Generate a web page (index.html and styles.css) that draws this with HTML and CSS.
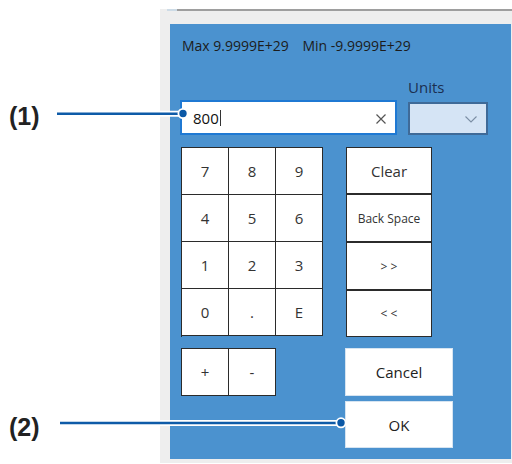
FILE: index.html
```html
<!DOCTYPE html>
<html lang="en">

<head>
    <meta charset="UTF-8">
    <title>Numeric Input</title>
    <link rel="stylesheet" href="styles.css">
</head>

<body>
    <div id="page">
        <div id="labels">
            <div class="callout" id="c1">(1)</div>
            <div class="callout" id="c2">(2)</div>
        </div>

        <div id="win">
            <div id="topbar"></div>
            <div id="frame">
                <div id="panel">
                    <div id="limits">
                        <span>Max 9.9999E+29</span>
                        <span class="min">Min -9.9999E+29</span>
                    </div>

                    <div id="entry">
                        <div id="field">
                            <span class="value">800</span><span class="caret"></span>
                            <svg class="clear" width="10" height="10" viewBox="0 0 10 10">
                                <path d="M0.5 0.5L9.5 9.5M9.5 0.5L0.5 9.5" stroke="#555" stroke-width="1.2" fill="none" />
                            </svg>
                        </div>
                        <div id="units">
                            <span class="units-label">Units</span>
                            <div class="select">
                                <svg width="12" height="7" viewBox="0 0 12 7">
                                    <path d="M0.5 0.5L6 6L11.5 0.5" stroke="#7b8ea4" stroke-width="1.1" fill="none" />
                                </svg>
                            </div>
                        </div>
                    </div>

                    <div id="pad">
                        <div class="keys">
                            <div class="key">7</div>
                            <div class="key">8</div>
                            <div class="key">9</div>
                            <div class="key">4</div>
                            <div class="key">5</div>
                            <div class="key">6</div>
                            <div class="key">1</div>
                            <div class="key">2</div>
                            <div class="key">3</div>
                            <div class="key">0</div>
                            <div class="key">.</div>
                            <div class="key">E</div>
                        </div>
                        <div class="side">
                            <div class="skey big">Clear</div>
                            <div class="skey">Back Space</div>
                            <div class="skey">&gt; &gt;</div>
                            <div class="skey">&lt; &lt;</div>
                        </div>
                    </div>

                    <div id="bottom">
                        <div class="keys signs">
                            <div class="key">+</div>
                            <div class="key">-</div>
                        </div>
                        <div class="actions">
                            <div class="act">Cancel</div>
                            <div class="act ok">OK</div>
                        </div>
                    </div>
                </div>
            </div>
        </div>
    </div>

    <!-- callout lines lie over the dialog -->
    <svg id="lines" width="512" height="464" viewBox="0 0 512 464">
        <path d="M57 113.7H183M60 423H341" stroke="#fff" stroke-width="6" fill="none" />
        <path d="M57 113.7H183M60 423H341" stroke="#0e5ba8" stroke-width="2.6" fill="none" />
        <circle cx="183" cy="113.5" r="4.6" fill="#0b58a6" stroke="#fff" stroke-width="1.8" />
        <circle cx="341" cy="422.8" r="4.6" fill="#0b58a6" stroke="#fff" stroke-width="1.8" />
    </svg>
</body>

</html>
```

FILE: styles.css
```css
* {
    margin: 0;
    padding: 0;
    box-sizing: border-box;
}

body {
    width: 512px;
    height: 464px;
    background: #fff;
    font-family: "Open Sans", "Noto Sans", sans-serif;
    color: #222;
    position: relative;
    overflow: hidden;
}

#page {
    display: flex;
    height: 464px;
}

#labels {
    width: 160px;
    padding: 102px 0 0 9px;
}

.callout {
    font-family: "Liberation Sans", Arial, sans-serif;
    font-weight: bold;
    font-size: 25px;
    line-height: 28px;
    color: #222;
}

#c2 {
    margin-top: 283px;
}

#win {
    width: 352px;
    margin-top: 9px;
}

#topbar {
    height: 2px;
    background: linear-gradient(to right, #eee 0, #eee 7px, #cddbe6 7px, #cddbe6 17px, #9e9e9e 17px);
}

#frame {
    background: #eeeeee;
    padding: 13px 1px 4px 10px;
}

#panel {
    height: 435px;
    background: #4b92cf;
    padding: 14px 0 0 11px;
}

#limits {
    height: 16px;
    line-height: 16px;
    font-size: 14px;
    color: #1c1c1c;
    padding-left: 1px;
    white-space: nowrap;
}

#limits .min {
    margin-left: 10px;
}

#entry {
    display: flex;
    align-items: flex-end;
    margin-top: 23px;
}

#field {
    width: 217px;
    height: 35px;
    margin-left: -1px;
    background: #fff;
    border: 2px solid #1f79d3;
    display: flex;
    align-items: center;
    padding: 0 9px 0 11px;
    font-size: 15px;
    color: #111;
}

#field .caret {
    width: 1px;
    height: 16px;
    background: #333;
    margin-left: 1px;
}

#field .clear {
    margin-left: auto;
    margin-top: 3px;
}

#units {
    margin-left: 11px;
    width: 80px;
    display: flex;
    flex-direction: column;
}

.units-label {
    font-size: 15px;
    line-height: 20px;
    color: #1b2f50;
    margin-bottom: 5px;
}

.select {
    height: 33px;
    background: #d5e4f5;
    border: 2px solid #3f6a98;
    display: flex;
    align-items: center;
    justify-content: flex-end;
    padding: 2px 9px 0 0;
}

#pad {
    display: flex;
    gap: 23px;
    margin-top: 12px;
}

.keys {
    display: grid;
    grid-template-columns: repeat(3, 47px);
    grid-auto-rows: 47px;
    border-top: 1px solid #2b2b2b;
    border-left: 1px solid #2b2b2b;
    width: 142px;
}

.key {
    background: #fff;
    border-right: 1px solid #2b2b2b;
    border-bottom: 1px solid #2b2b2b;
    display: flex;
    align-items: center;
    justify-content: center;
    font-size: 15px;
    color: #333;
}

.side {
    width: 86px;
    display: grid;
    grid-template-rows: 47px 48px 48px 47px;
}

.skey {
    background: #fff;
    border: 1px solid #2b2b2b;
    display: flex;
    align-items: center;
    justify-content: center;
    font-size: 12px;
    color: #333;
}

.skey.big {
    font-size: 15px;
}

#bottom {
    display: flex;
    margin-top: 11px;
}

.keys.signs {
    grid-template-columns: repeat(2, 47px);
    width: 95px;
    align-self: flex-start;
}

.actions {
    margin-left: 69px;
    display: flex;
    flex-direction: column;
    gap: 5px;
}

.act {
    width: 108px;
    height: 48px;
    background: #fff;
    border: 1px solid #d6e4f1;
    display: flex;
    align-items: center;
    justify-content: center;
    font-size: 15px;
    color: #222;
}

.act.ok {
    height: 47px;
}

#lines {
    position: absolute;
    left: 0;
    top: 0;
    pointer-events: none;
}
```
